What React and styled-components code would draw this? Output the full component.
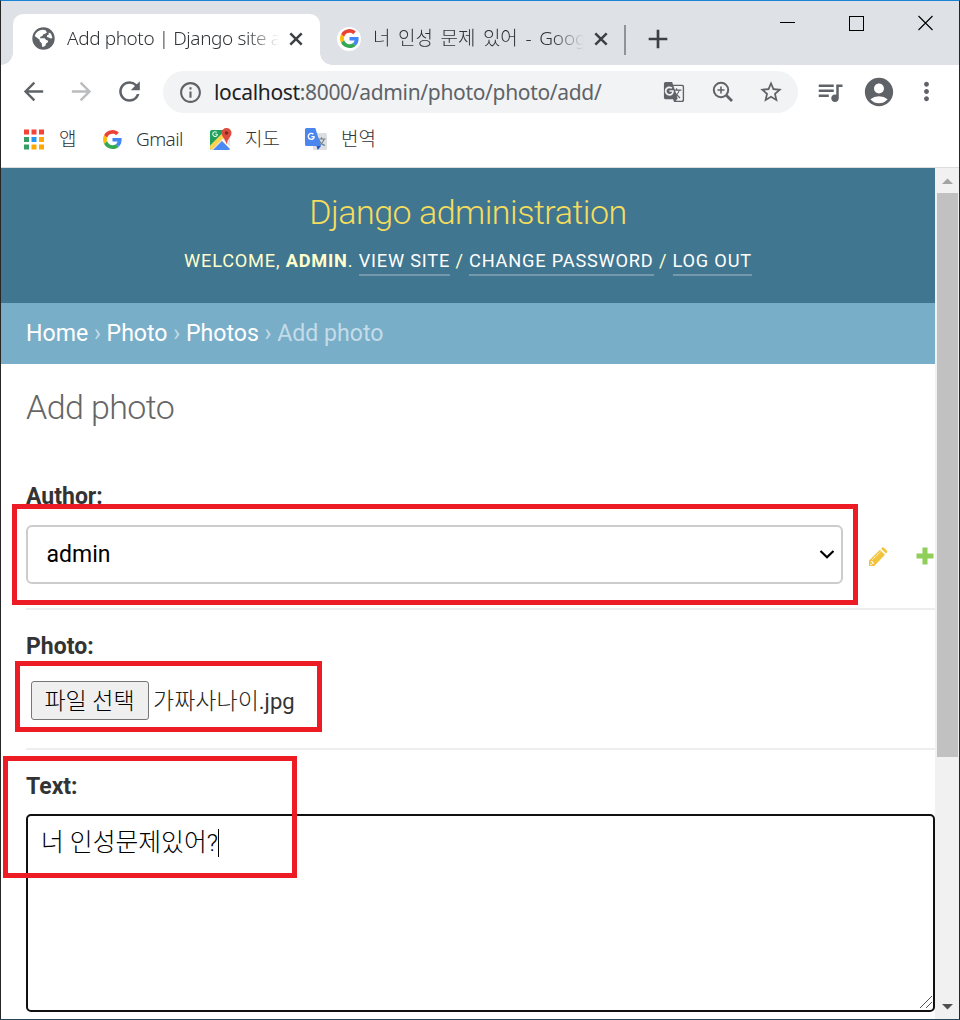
import React from 'react';
import styled, { createGlobalStyle } from 'styled-components';
import {
  MdAdd, MdArrowBack, MdArrowForward, MdRefresh, MdInfoOutline,
  MdGTranslate, MdStarBorder, MdQueueMusic, MdAccountCircle, MdMoreVert,
} from 'react-icons/md';

const uiFont = '"Noto Sans", "Noto Sans CJK KR", sans-serif';
const pageFont = 'Roboto, "Noto Sans CJK KR", sans-serif';

const GlobalStyle = createGlobalStyle`
  *, *::before, *::after { box-sizing: border-box; }
  body { margin: 0; overflow: hidden; background: #fff; }
`;

const Window = styled.div`
  position: relative;
  width: 960px;
  height: 1020px;
  overflow: hidden;
  display: flex;
  flex-direction: column;
  background: #fff;
  border: 1px solid #262626;
  border-top-color: #1883d7;
  border-bottom-color: #24485c;
  font-family: ${uiFont};
`;

const TabStrip = styled.div`
  display: flex;
  height: 64px;
  flex: none;
  background: #dee1e6;
  padding: 13px 0 0 12px;
`;

const ActiveTab = styled.div`
  position: relative;
  display: flex;
  align-items: center;
  width: 307px;
  height: 51px;
  padding: 0 0 2px 19px;
  background: #fff;
  border-radius: 10px 10px 0 0;
  &::before, &::after {
    content: '';
    position: absolute;
    bottom: 0;
    width: 12px;
    height: 12px;
  }
  &::before { left: -12px; background: radial-gradient(circle at 0 0, transparent 11.5px, #fff 12px); }
  &::after { right: -12px; background: radial-gradient(circle at 100% 0, transparent 11.5px, #fff 12px); }
`;

const Tab = styled.div`
  display: flex;
  align-items: center;
  width: 305px;
  height: 51px;
  padding: 0 0 2px 17px;
`;

const TabTitle = styled.span`
  display: block;
  width: ${p => p.$w}px;
  margin-left: ${p => p.$ml}px;
  margin-top: ${p => p.$mt || 0}px;
  white-space: nowrap;
  font-size: 19px;
  font-weight: 300;
  line-height: 30px;
  letter-spacing: ${p => p.$ls || 0}px;
  word-spacing: ${p => p.$ws || 0}px;
  color: #303336;
  mask-image: linear-gradient(to right, #000 calc(100% - 32px), transparent);
`;

const FaviconDisc = styled.span`
  display: grid;
  place-items: center;
  width: 24px;
  height: 24px;
  border-radius: 50%;
  background: #fff;
`;

const Glyph = styled.span`
  display: flex;
  flex: none;
  margin-left: ${p => p.$ml || 0}px;
  margin-top: ${p => p.$mt || 0}px;
  color: ${p => p.$c || '#5f6368'};
`;

const TabDivider = styled.span`
  width: 2px;
  height: 30px;
  margin: 11px 0 0 -1px;
  background: #909297;
`;

const WindowButtons = styled.div`
  display: flex;
  margin-left: auto;
  padding-right: 25px;
`;

const Toolbar = styled.div`
  display: flex;
  align-items: center;
  flex: none;
  height: 54px;
  padding-left: 18px;
`;

const Omnibox = styled.div`
  display: flex;
  align-items: center;
  width: 635px;
  height: 42px;
  margin-left: 18px;
  padding-left: 15px;
  border-radius: 21px;
  background: #f1f3f4;
`;

const Address = styled.span`
  width: 450px;
  margin-left: 11px;
  white-space: nowrap;
  font-size: 21px;
  line-height: 28px;
  letter-spacing: -0.33px;
  color: #5f6368;
  b { font-weight: 400; color: #202124; }
`;

const Bookmarks = styled.div`
  display: flex;
  align-items: center;
  flex: none;
  height: 49px;
  padding: 0 0 8px 23px;
  border-bottom: 1px solid #dadce0;
`;

const Bookmark = styled.div`
  display: flex;
  align-items: center;
  width: ${p => p.$w}px;
`;

const BookmarkName = styled.span`
  margin-left: ${p => p.$ml}px;
  font-size: 19px;
  font-weight: 300;
  line-height: 26px;
  letter-spacing: ${p => p.$ls || 0}px;
  color: #303336;
  white-space: nowrap;
`;

const Viewport = styled.div`
  display: flex;
  flex: 1;
  min-height: 0;
`;

const Page = styled.div`
  flex: 1;
  min-width: 0;
  overflow: hidden;
  font-family: ${pageFont};
  color: #333;
`;

const Header = styled.header`
  height: 135px;
  padding-top: 22px;
  background: #417690;
  color: #ffc;
  text-align: center;
`;

const SiteName = styled.h1`
  margin: 0;
  font-size: 34px;
  line-height: 45px;
  font-weight: 300;
  letter-spacing: -0.5px;
  color: #f5dd5d;
`;

const UserTools = styled.div`
  margin-top: 12px;
  font-size: 18.2px;
  line-height: 28px;
  letter-spacing: 0.8px;
  font-weight: 400;
  text-transform: uppercase;
  a {
    display: inline-block;
    height: 29px;
    color: #fff;
    border-bottom: 2px solid #7698ac;
  }
`;

const Breadcrumbs = styled.nav`
  height: 61px;
  padding: 0 25px;
  background: #79aec8;
  color: #c4dce8;
  font-size: 23.1px;
  line-height: 61px;
  a { color: #fff; }
`;

const Content = styled.main`
  padding: 20px 0 0 25px;
`;

const PageTitle = styled.h1`
  margin: 0;
  height: 47px;
  font-size: 34px;
  line-height: 46px;
  font-weight: 300;
  letter-spacing: -0.6px;
  color: #666;
`;

const FormRow = styled.div`
  height: ${p => p.$h}px;
  margin-top: ${p => p.$mt || 0}px;
  padding-top: ${p => p.$pt}px;
  border-bottom: 2px solid #eee;
`;

const Label = styled.div`
  font-size: 23px;
  line-height: 30px;
  font-weight: 700;
  color: #333;
`;

const FieldLine = styled.div`
  display: flex;
  align-items: center;
  margin-top: ${p => p.$mt}px;
  padding-left: ${p => p.$pl || 0}px;
`;

const Select = styled.div`
  display: flex;
  align-items: center;
  justify-content: space-between;
  width: 817px;
  height: 59px;
  padding: 0 6px 0 18.5px;
  border: 2px solid #ccc;
  border-radius: 6px;
  font-size: 23px;
  color: #000;
`;

const SelectArrow = styled.svg`
  margin-top: -2px;
`;

const FileButton = styled.span`
  display: grid;
  place-items: center;
  width: 118px;
  height: 39px;
  padding: 2px 1px 0 0;
  border: 1px solid #767676;
  border-radius: 3px;
  background: #efefef;
  color: #000;
  font-size: 23px;
  font-weight: 300;
  line-height: 30px;
  white-space: nowrap;
`;

const FileName = styled.span`
  margin: 2px 0 0 4px;
  font-size: 23px;
  font-weight: 300;
  line-height: 30px;
  color: #222;
  small { font-size: 22px; font-weight: 400; color: #333; }
`;

const TextArea = styled.div`
  display: flex;
  align-items: flex-start;
  position: relative;
  width: 909px;
  height: 198px;
  margin-top: 12px;
  padding: 12px 13px;
  border: 2px solid #101010;
  border-radius: 5px;
  font-size: 24.8px;
  font-weight: 300;
  line-height: 30px;
  color: #000;
`;

const Caret = styled.i`
  width: 1px;
  height: 28px;
  margin-top: 1px;
  background: #000;
`;

const Grip = styled.svg`
  position: absolute;
  right: 0;
  bottom: 1px;
`;

const Scrollbar = styled.div`
  display: flex;
  flex-direction: column;
  align-items: center;
  justify-content: space-between;
  width: 24px;
  background: #f1f1f1;
`;

const Thumb = styled.div`
  width: 21px;
  height: 564px;
  margin-bottom: auto;
  background: #c1c1c1;
`;

const ScrollArrow = styled.svg`
  display: block;
  flex: none;
`;

const Highlight = styled.div`
  position: absolute;
  left: ${p => p.$x}px;
  top: ${p => p.$y}px;
  width: ${p => p.$w}px;
  height: ${p => p.$h}px;
  border: 5px solid #ed1c24;
`;

const GlobeIcon = () => (
  <svg width="23" height="23" viewBox="0 0 22 22">
    <circle cx="11" cy="11" r="10.700" fill="#5f6368" />
    <path d="M10.500 2.700 13 3.200l1.300 2-1.800 1.300-2 .6-.4 1.600-2.100.6-.3 1.500h4.500l1.300 1.600 1.600.4.300 1.600-2 1.500-.6 2-2.200 1.200-1-.4-.3-3.200-2-1.800v-1.500L2.600 8.700A8.600 8.600 0 0 1 10.500 2.700z" fill="#fff" />
    <path d="M15.800 5.500l1.700.2a8.500 8.500 0 0 1 2 4.800l-1.800.6-1.700-1-1.800-.6.300-1.600 1.600-.8z" fill="#fff" />
  </svg>
);

const GoogleG = ({ size }) => (
  <svg width={size} height={size} viewBox="0 0 48 48">
    <path fill="#EA4335" d="M24 9.5c3.54 0 6.71 1.22 9.21 3.6l6.85-6.85C35.9 2.38 30.47 0 24 0 14.62 0 6.51 5.38 2.56 13.22l7.98 6.19C12.43 13.72 17.74 9.5 24 9.5z" />
    <path fill="#4285F4" d="M46.98 24.55c0-1.57-.15-3.09-.38-4.55H24v9.02h12.94c-.58 2.96-2.26 5.48-4.78 7.18l7.73 6c4.51-4.18 7.09-10.36 7.09-17.65z" />
    <path fill="#FBBC05" d="M10.53 28.59c-.48-1.45-.76-2.99-.76-4.59s.27-3.14.76-4.59l-7.98-6.19C.92 16.46 0 20.12 0 24c0 3.88.92 7.54 2.56 10.78l7.97-6.19z" />
    <path fill="#34A853" d="M24 48c6.48 0 11.93-2.13 15.89-5.81l-7.73-6c-2.15 1.45-4.92 2.3-8.16 2.3-6.26 0-11.57-4.22-13.47-9.91l-7.98 6.19C6.51 42.62 14.62 48 24 48z" />
  </svg>
);

const AppsIcon = () => (
  <svg width="21" height="21" viewBox="0 0 21 21">
    {['#f44336', '#f44336', '#f44336', '#34a05f', '#2196f3', '#ffa900', '#34a05f', '#ffa900', '#ffa900'].map((c, i) => (
      <rect key={i} x={(i % 3) * 7.5} y={Math.floor(i / 3) * 7.5 + 0.5} width="5" height="5" fill={c} />
    ))}
  </svg>
);

const MapsIcon = () => (
  <svg width="24" height="24" viewBox="0 0 24 24">
    <clipPath id="mapTile"><rect x="1" y="3" width="20" height="20" rx="2" /></clipPath>
    <g clipPath="url(#mapTile)">
      <rect x="1" y="3" width="20" height="20" fill="#1fa15d" />
      <path d="M1 23 21 3v20z" fill="#dfe3e6" />
      <path d="M4 23 13 14l9 9z" fill="#4a89f3" />
      <path d="M1 18.500 16.500 3H21v1.500L2.500 23H1z" fill="#ffd24d" />
      <path d="M13 12.500 23 22.500" stroke="#fff" strokeWidth="1.500" />
    </g>
    <path d="M8.600 7.300H6.300M8.500 7.300A2.400 2.400 0 1 1 7.800 5.400" fill="none" stroke="#e8f5e9" strokeWidth="1.100" />
    <path d="M17.500 1a5 5 0 0 0-5 5c0 3.800 4 5.300 5 11.500 1-6.200 5-7.700 5-11.500a5 5 0 0 0-5-5z" fill="#dd4b3e" />
    <circle cx="17.500" cy="6" r="1.800" fill="#7d2a22" />
  </svg>
);

const TranslateIcon = () => (
  <svg width="24" height="24" viewBox="0 0 24 24">
    <rect x="9" y="6" width="14" height="17" rx="1.500" fill="#dcdfe1" />
    <path d="M13.500 12h8M17.500 10.300V12M20 12c-.6 3-2.500 5-5 6.500M15 13c1 2.500 3 4.500 6 5.500" fill="none" stroke="#6b7f8c" strokeWidth="1.200" />
    <path d="M12.500 19H17l-3.200 4z" fill="#2a56c6" />
    <path d="M2.500 1h8.800L17 19H2.500A1.500 1.500 0 0 1 1 17.500v-15A1.500 1.500 0 0 1 2.500 1z" fill="#4a86ee" />
    <path d="M10.500 9.600H7.400M10.300 9.600A3 3 0 1 1 9.400 7.200" fill="none" stroke="#fff" strokeWidth="1.400" />
  </svg>
);

const ZoomIcon = () => (
  <svg width="22" height="22" viewBox="0 0 22 22" fill="none" stroke="#5f6368">
    <circle cx="9" cy="9" r="7.200" strokeWidth="2" />
    <path d="M14.300 14.300 20 20" strokeWidth="2.800" />
    <path d="M9 5.500v7M5.500 9h7" strokeWidth="1.600" />
  </svg>
);

const PencilIcon = () => (
  <svg width="20" height="20" viewBox="0 0 20 20">
    <path d="M1 13.500 12 2.800l5 5L6.300 19H1z" fill="#f2c43d" />
    <path d="m13 1.700 1-1q1-1 2 0L18.800 3.500q1 1 0 2L17.900 6.600z" fill="#f2c43d" />
    <path d="m4.500 12.500 8-7.800" stroke="#fff" strokeWidth="1" strokeDasharray="1.500 .6" />
    <path d="M3 14.500q2 0 2 2.500M2.500 17l1 1" stroke="#fff" strokeWidth="1.200" fill="none" />
  </svg>
);

const TabClose = () => (
  <svg width="21" height="21" viewBox="0 0 21 21">
    <path d="M5.300 5.300 16.700 16.700M16.700 5.300 5.300 16.700" stroke="currentColor" strokeWidth="2.500" />
  </svg>
);

export default function App() {
  return (
    <>
      <GlobalStyle />
      <Window>
        <TabStrip>
          <ActiveTab>
            <Glyph><GlobeIcon /></Glyph>
            <TabTitle $w={212} $ml={12} $mt={-1} $ls={-0.4}>Add photo | Django site a</TabTitle>
            <Glyph $ml={6} $c="#3c4043"><TabClose /></Glyph>
          </ActiveTab>
          <Tab>
            <FaviconDisc><GoogleG size={19} /></FaviconDisc>
            <TabTitle $w={211} $ml={12} $mt={-2} $ls={-0.15} $ws={3}>너 인성 문제 있어 - Goog</TabTitle>
            <Glyph $ml={6} $c="#3c4043"><TabClose /></Glyph>
          </Tab>
          <TabDivider />
          <Glyph $ml={16} $mt={9} $c="#3c4043"><MdAdd size={32} /></Glyph>
          <WindowButtons>
            <svg width="154" height="20" viewBox="0 0 154 20" fill="none" stroke="#000">
              <path d="M0 8.500h15" />
              <rect x="69.500" y="2.500" width="14" height="14" />
              <path d="M138.500 2l14 14M152.500 2l-14 14" strokeWidth="1.100" />
            </svg>
          </WindowButtons>
        </TabStrip>
        <Toolbar>
          <Glyph $mt={-1}><MdArrowBack size={29} /></Glyph>
          <Glyph $ml={19} $mt={-1} $c="#babcbe"><MdArrowForward size={29} /></Glyph>
          <Glyph $ml={18} $mt={-1}><MdRefresh size={31} /></Glyph>
          <Omnibox>
            <Glyph><MdInfoOutline size={25} /></Glyph>
            <Address><b>localhost</b>:8000/admin/photo/photo/add/</Address>
            <Glyph $ml={-1}><MdGTranslate size={22} /></Glyph>
            <Glyph $ml={27}><ZoomIcon /></Glyph>
            <Glyph $ml={24}><MdStarBorder size={26} /></Glyph>
          </Omnibox>
          <Glyph $ml={17}><MdQueueMusic size={30} /></Glyph>
          <Glyph $ml={17} $mt={-1}><MdAccountCircle size={34} /></Glyph>
          <Glyph $ml={16} $mt={-1}><MdMoreVert size={29} /></Glyph>
        </Toolbar>
        <Bookmarks>
          <Bookmark $w={79}><AppsIcon /><BookmarkName $ml={14}>앱</BookmarkName></Bookmark>
          <Bookmark $w={106}><GoogleG size={19} /><BookmarkName $ml={14} $ls={-0.6}>Gmail</BookmarkName></Bookmark>
          <Bookmark $w={95}><MapsIcon /><BookmarkName $ml={12}>지도</BookmarkName></Bookmark>
          <Bookmark><TranslateIcon /><BookmarkName $ml={13}>번역</BookmarkName></Bookmark>
        </Bookmarks>
        <Viewport>
          <Page>
            <Header>
              <SiteName>Django administration</SiteName>
              <UserTools>
                Welcome, <b>admin</b>. <a>View site</a> / <a>Change password</a> / <a>Log out</a>
              </UserTools>
            </Header>
            <Breadcrumbs><a>Home</a> › <a>Photo</a> › <a>Photos</a> › Add photo</Breadcrumbs>
            <Content>
              <PageTitle>Add photo</PageTitle>
              <FormRow $h={128} $mt={51} $pt={0}>
                <Label>Author:</Label>
                <FieldLine $mt={13}>
                  <Select>
                    admin
                    <SelectArrow width="16" height="12" viewBox="0 0 16 12"><path d="M1.500 3 8 9.300 14.500 3" fill="none" stroke="#000" strokeWidth="2.200" /></SelectArrow>
                  </Select>
                  <Glyph $ml={25} $mt={4}><PencilIcon /></Glyph>
                  <Glyph $ml={28} $mt={3}>
                    <svg width="18" height="18" viewBox="0 0 18 18"><path d="M6.500.5h5v6h6v5h-6v6h-5v-6h-6v-5h6z" fill="#8fce59" /></svg>
                  </Glyph>
                </FieldLine>
              </FormRow>
              <FormRow $h={140} $pt={22}>
                <Label>Photo:</Label>
                <FieldLine $mt={19} $pl={5}>
                  <FileButton>파일 선택</FileButton>
                  <FileName>가짜사나이<small>.jpg</small></FileName>
                </FieldLine>
              </FormRow>
              <FormRow $h={280} $pt={22}>
                <Label>Text:</Label>
                <TextArea>
                  너 인성문제있어?<Caret />
                  <Grip width="14" height="14" viewBox="0 0 14 14"><path d="M1 13 13 1M7 13l6-6" stroke="#555" fill="none" /></Grip>
                </TextArea>
              </FormRow>
            </Content>
          </Page>
          <Scrollbar>
            <ScrollArrow width="24" height="25" viewBox="0 0 24 25"><path d="M7 16 12.500 10.500 18 16z" fill="#a3a3a3" /></ScrollArrow>
            <Thumb />
            <ScrollArrow width="24" height="25" viewBox="0 0 24 25"><path d="M7 10l5.500 5.500L18 10z" fill="#505050" /></ScrollArrow>
          </Scrollbar>
        </Viewport>
        <Highlight $x={11} $y={503} $w={846} $h={101} />
        <Highlight $x={14} $y={660} $w={307} $h={71} />
        <Highlight $x={2} $y={755} $w={294} $h={122} />
      </Window>
    </>
  );
}
